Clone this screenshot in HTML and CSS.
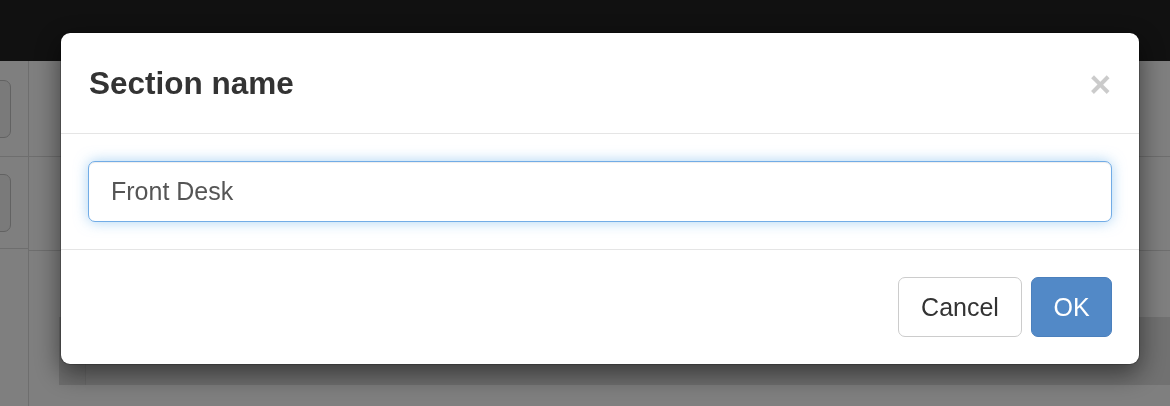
FILE: index.html
```html
<!DOCTYPE html>
<html lang="en">
<head>
<meta charset="utf-8">
<title>Section name</title>
<link rel="stylesheet" href="styles.css">
</head>
<body>
<div class="page">
  <header class="navbar"></header>
  <div class="page-body">
    <aside class="sidebar">
      <div class="side-row side-row-1"><span class="ghost-btn"></span></div>
      <div class="side-row side-row-2"><span class="ghost-btn"></span></div>
    </aside>
    <main class="main">
      <div class="main-row main-row-1"></div>
      <div class="main-row main-row-2"></div>
      <div class="panel"><div class="panel-cell"></div></div>
    </main>
  </div>
</div>

<div class="backdrop">
  <div class="modal">
    <div class="modal-header">
      <h4 class="modal-title">Section name</h4>
      <button class="close" type="button" aria-label="Close">×</button>
    </div>
    <div class="modal-body">
      <input class="form-control" type="text" value="Front Desk">
    </div>
    <div class="modal-footer">
      <button class="btn btn-default" type="button">Cancel</button>
      <button class="btn btn-primary" type="button">OK</button>
    </div>
  </div>
</div>
</body>
</html>
```

FILE: styles.css
```css
* { box-sizing: border-box; }

html, body {
  margin: 0;
  padding: 0;
  height: 100%;
  overflow: hidden;
  background: #ffffff;
  font-family: "Liberation Sans", Arial, sans-serif;
}

/* ---------- page underneath the backdrop ---------- */
.page {
  height: 406px;
  display: flex;
  flex-direction: column;
}

.navbar {
  height: 61px;
  flex: none;
  background: #222222;
}

.page-body {
  flex: 1;
  display: flex;
}

.sidebar {
  width: 29px;
  flex: none;
  border-right: 1px solid #dcdcdc;
  overflow: hidden;
}

.side-row {
  border-bottom: 1px solid #dcdcdc;
  display: flex;
  align-items: center;
}

.side-row-1 { height: 96px; }
.side-row-2 { height: 92px; }

.ghost-btn {
  display: block;
  width: 51px;
  height: 58px;
  margin-left: -40px;
  border: 1px solid #c4c4c4;
  border-radius: 7px;
  background: #f4f4f4;
}

.main {
  flex: 1;
  display: flex;
  flex-direction: column;
}

.main-row { border-bottom: 1px solid #dcdcdc; }
.main-row-1 { height: 96px; }
.main-row-2 { height: 94px; }

.panel {
  margin: 66px 0 0 30px;
  height: 68px;
  background: #e2e2e2;
  display: flex;
}

.panel-cell {
  width: 27px;
  border-right: 1px solid #d2d2d2;
  background: #dedede;
}

/* ---------- backdrop + modal ---------- */
.backdrop {
  position: fixed;
  inset: 0;
  background: rgba(0, 0, 0, 0.5);
}

.modal {
  width: 1080px;
  margin: 32px 0 0 60px;
  background: #ffffff;
  border: 1px solid rgba(0, 0, 0, 0.2);
  border-radius: 10px;
  box-shadow: 0 9px 26px rgba(0, 0, 0, 0.5);
  background-clip: padding-box;
}

.modal-header {
  display: flex;
  align-items: center;
  justify-content: space-between;
  padding: 28px 27px 27px 27px;
  border-bottom: 1px solid #e5e5e5;
}

.modal-title {
  margin: 0 0 0 1px;
  font-size: 31.5px;
  line-height: 45px;
  font-weight: bold;
  color: #333333;
}

.close {
  padding: 0;
  margin: 1px 1px 0 0;
  border: 0;
  background: transparent;
  font-family: "Liberation Sans", Arial, sans-serif;
  font-size: 37px;
  font-weight: bold;
  line-height: 1;
  color: #000000;
  opacity: 0.2;
  cursor: pointer;
}

.modal-body {
  padding: 27px;
}

.form-control {
  display: block;
  width: 100%;
  height: 61px;
  padding: 10px 22px;
  font-family: "Liberation Sans", Arial, sans-serif;
  font-size: 25px;
  color: #555555;
  background: #ffffff;
  border: 1px solid #72ace6;
  border-radius: 7px;
  outline: 0;
  box-shadow: inset 0 1px 1px rgba(0, 0, 0, 0.075), 0 0 14px rgba(102, 175, 233, 0.55);
}

.modal-footer {
  display: flex;
  justify-content: flex-end;
  gap: 9px;
  padding: 27px 27px 27px 27px;
  border-top: 1px solid #e5e5e5;
}

.btn {
  height: 60px;
  padding: 0 21px;
  font-family: "Liberation Sans", Arial, sans-serif;
  font-size: 25px;
  line-height: 1;
  border-radius: 7px;
  border: 1px solid transparent;
  cursor: pointer;
}

.btn-default {
  width: 124px;
  color: #333333;
  background: #ffffff;
  border-color: #cccccc;
}

.btn-primary {
  width: 81px;
  color: #ffffff;
  background: #5289c7;
  border-color: #4b80bd;
}
```
